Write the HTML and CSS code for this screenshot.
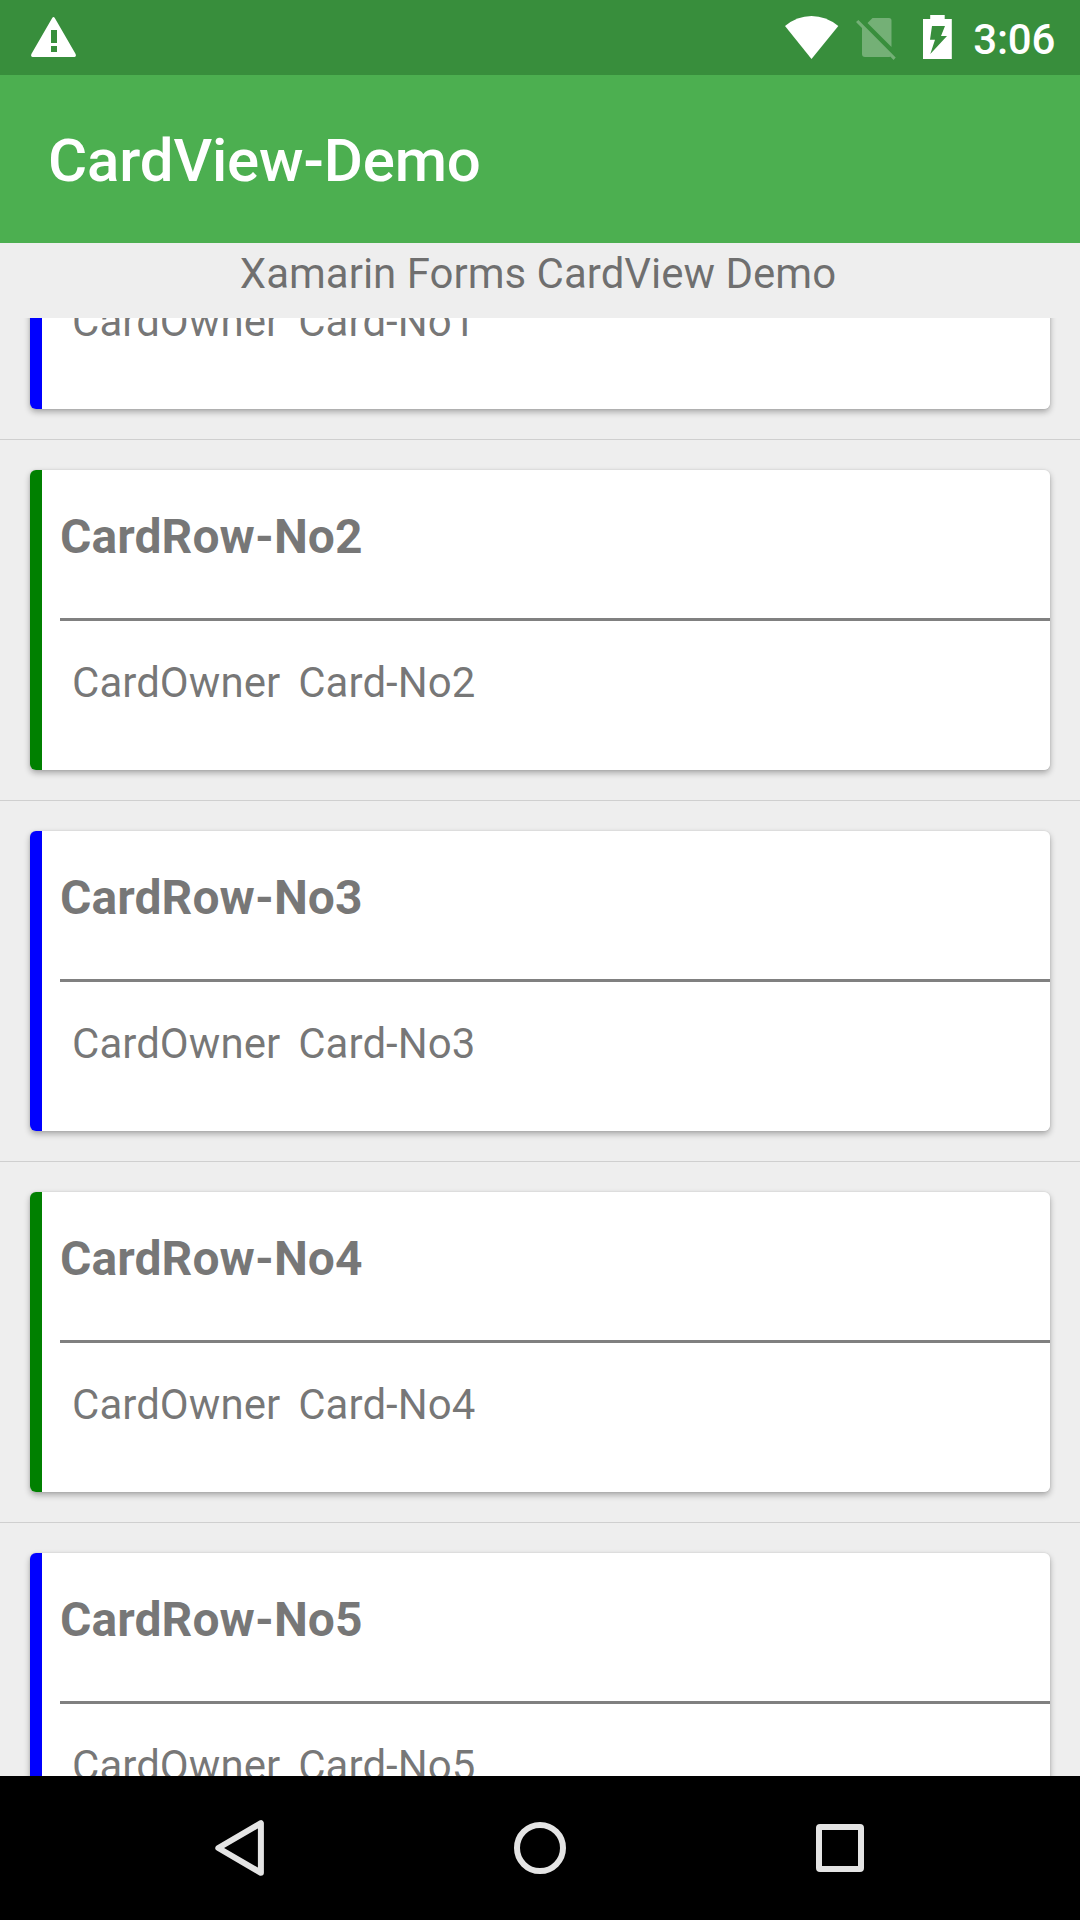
FILE: index.html
```html
<!DOCTYPE html>
<html lang="en">
<head>
<meta charset="utf-8">
<title>CardView-Demo</title>
<link rel="stylesheet" href="styles.css">
</head>
<body>
<div class="screen">
  <div class="status-bar">
    <svg class="icon-alert" width="46" height="42" viewBox="0 0 46 42" fill="#fff"><path fill-rule="evenodd" d="M21.2 2.1Q22.5 0 23.8 2.1L44.6 38Q45.6 41 43.5 41H1.5Q-.6 41 .4 38ZM20 14V27H26V14ZM20 30V36H26V30Z"/></svg>
    <div class="status-icons">
      <svg class="icon-wifi" width="54" height="44" viewBox="0 0 54 44" fill="#fff"><path d="M0 10Q12 0 26.5 0T53.3 10L26.5 43Z"/></svg>
      <svg class="icon-sim" width="41" height="44" viewBox="0 0 41 44" fill="#fff" fill-opacity=".3"><path d="M11.5 7L16.5 2H33Q35.5 2 35.5 4.5V31ZM0 5.9L2.4 4L39.7 41.6L37.6 44L34.2 40.5Q33.5 41 33 41H9Q6 41 6 38V12Z"/></svg>
      <svg class="icon-battery" width="29" height="44" viewBox="0 0 29 44" fill="#fff"><path fill-rule="evenodd" d="M7.2 0H21.7V4H28.8V44H0V4H7.2ZM9 11L7 24.7H12L7.3 39L24 21H18L22 11Z"/></svg>
      <span class="clock">3:06</span>
    </div>
  </div>
  <div class="app-bar"><h1 class="app-title">CardView-Demo</h1></div>
  <div class="page-label">Xamarin Forms CardView Demo</div>
  <div class="list">
    <div class="list-content">
      <div class="row"><div class="card blue"><div class="card-body"><h2 class="card-title"></h2><div class="card-owner"><span>CardOwner</span><span>Card-No1</span></div></div></div></div>
      <div class="row"><div class="card green"><div class="card-body"><h2 class="card-title">CardRow-No2</h2><div class="card-owner"><span>CardOwner</span><span>Card-No2</span></div></div></div></div>
      <div class="row"><div class="card blue"><div class="card-body"><h2 class="card-title">CardRow-No3</h2><div class="card-owner"><span>CardOwner</span><span>Card-No3</span></div></div></div></div>
      <div class="row"><div class="card green"><div class="card-body"><h2 class="card-title">CardRow-No4</h2><div class="card-owner"><span>CardOwner</span><span>Card-No4</span></div></div></div></div>
      <div class="row"><div class="card blue"><div class="card-body"><h2 class="card-title">CardRow-No5</h2><div class="card-owner"><span>CardOwner</span><span>Card-No5</span></div></div></div></div>
    </div>
  </div>
  <div class="nav-bar">
    <svg width="144" height="144" viewBox="0 0 144 144" fill="none" stroke="#e4e4e4" stroke-width="6" stroke-linejoin="round"><path d="M50.3 72L92.9 47.2V96.8Z"/></svg>
    <svg width="144" height="144" viewBox="0 0 144 144" fill="none" stroke="#e4e4e4" stroke-width="6"><circle cx="72" cy="72" r="23"/></svg>
    <svg width="144" height="144" viewBox="0 0 144 144"><path fill="#e4e4e4" fill-rule="evenodd" d="M52 48H92Q96 48 96 52V92Q96 96 92 96H52Q48 96 48 92V52Q48 48 52 48ZM54 54V90H90V54Z"/></svg>
  </div>
</div>
</body>
</html>
```
FILE: styles.css
```css
* { box-sizing: border-box; }

body {
  margin: 0;
  font-family: Roboto, sans-serif;
  color: rgba(0, 0, 0, .54);
}

.screen {
  display: flex;
  flex-direction: column;
  width: 1080px;
  height: 1920px;
  overflow: hidden;
  background: #eee;
}

.status-bar {
  flex: none;
  display: flex;
  justify-content: space-between;
  height: 75px;
  padding: 0 25px 0 31px;
  background: #388e3c;
}

.icon-alert { margin-top: 16px; }
.status-icons { display: flex; }
.icon-wifi { margin: 16px 17px 0 0; }
.icon-sim { margin: 16px 26px 0 0; }
.icon-battery { margin: 15px 21px 0 0; }

.clock {
  color: #fff;
  font-size: 42px;
  font-weight: 500;
  letter-spacing: -.25px;
  line-height: 79px;
}

.app-bar {
  flex: none;
  height: 168px;
  padding-left: 48px;
  background: #4caf50;
}

.app-title {
  margin: 0;
  color: #fff;
  font-size: 60px;
  font-weight: 500;
  letter-spacing: -.15px;
  line-height: 172px;
}

.page-label {
  flex: none;
  height: 75px;
  padding-right: 4px;
  text-align: center;
  font-size: 42px;
  line-height: 62px;
}

.list {
  flex: 1;
  min-height: 0;
  overflow: hidden;
}

/* scrolled position of the list */
.list-content { margin-top: -239px; }

.row {
  height: 361px;
  padding: 30px;
  border-bottom: 1px solid #cfcfcf;
}

.card {
  height: 300px;
  padding-left: 30px;
  border-radius: 6px;
  box-shadow: 0 3px 6px rgba(0, 0, 0, .3), 0 0 2px rgba(0, 0, 0, .12);
}

.blue { background: linear-gradient(to right, #00f 12px, #fff 12px); }
.green { background: linear-gradient(to right, #008000 12px, #fff 12px); }

.card-title {
  height: 151px;
  margin: 0;
  border-bottom: 3px solid #808080;
  font-size: 48px;
  font-weight: 700;
  letter-spacing: .08px;
  line-height: 133px;
}

.card-owner {
  display: flex;
  gap: 18px;
  padding-left: 12px;
  font-size: 42px;
  letter-spacing: .04px;
  line-height: 123px;
}

.nav-bar {
  flex: none;
  display: flex;
  justify-content: center;
  gap: 156px;
  height: 144px;
  background: #000;
}
```
